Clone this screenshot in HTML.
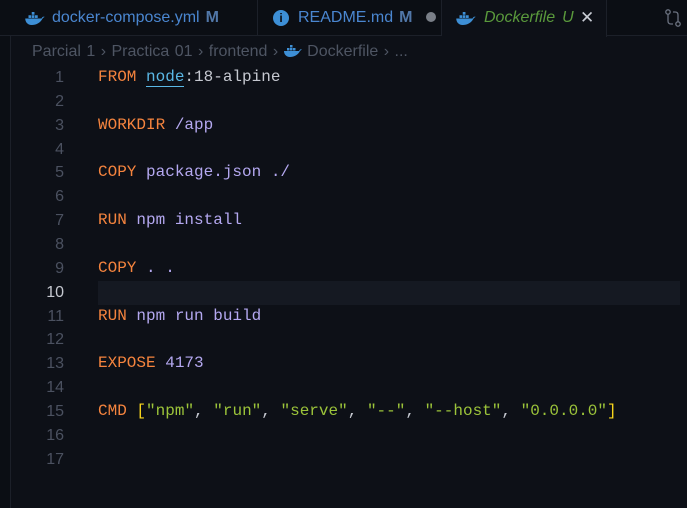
<!DOCTYPE html>
<html><head><meta charset="utf-8"><style>
*{margin:0;padding:0;box-sizing:border-box}
body{width:687px;height:472px;background:#0d1017;overflow:hidden;position:relative;font-family:"Liberation Sans",sans-serif}
.side{position:absolute;left:0;top:0;width:11px;height:472px;background:#0b0e14;border-right:1px solid #1c2029}
.tabs{position:absolute;left:0;top:0;width:687px;height:36px;background:#0b0e14;border-bottom:1px solid #1c2029}
.tab{position:absolute;top:0;height:36px;border-right:1px solid #1c2029;font-size:16px;line-height:36px;color:#4a86d0;white-space:nowrap}
.tab.act{background:#0d1017;height:37px}
.m{color:#5177a8;font-weight:bold;margin-left:6px}
.crumb{position:absolute;left:32px;top:41px;font-size:16px;color:#4e5563;white-space:nowrap;line-height:22px;word-spacing:1px}
.code{position:absolute;left:0;top:66px;width:687px;font-family:"Liberation Mono",monospace;font-size:16px}
.l{height:23.86px;line-height:23.86px;position:relative;white-space:pre}
.n{position:absolute;right:623px;color:#4b5160;font-size:16px;font-family:"Liberation Sans",sans-serif}
.t{position:absolute;left:98px;color:#b4a8f0}
.k{color:#f5843e}.s{color:#9cc43a}.y{color:#f7d51c}
.cur{position:absolute;left:98px;width:582px;background:#151922;height:23.86px}
.dk{position:absolute;top:12px}
</style></head><body>
<div class="tabs">
 <div class="tab" style="left:11px;width:247px;padding-left:41px"><svg class="dk" style="left:14px" width="20" height="13" viewBox="0 0 18 12"><path d="M0 6h15c1-2 2-2 3-1.5c-1 .5-1.5 1-2 1.5C14 10 10 12 6 12C2 12 0 9 0 6z" fill="#3d8fd6"/><rect x="3" y="3" width="2.5" height="2.5" fill="#3d8fd6"/><rect x="6" y="3" width="2.5" height="2.5" fill="#3d8fd6"/><rect x="9" y="3" width="2.5" height="2.5" fill="#3d8fd6"/><rect x="6" y="0" width="2.5" height="2.5" fill="#3d8fd6"/></svg>docker-compose.yml<span class="m">M</span></div>
 <div class="tab" style="left:258px;width:184px;padding-left:40px"><span style="position:absolute;left:15px;top:10px;width:16px;height:16px;border-radius:50%;background:#3d8fd6;color:#0b0e14;font-size:12px;line-height:16px;text-align:center;font-weight:bold">i</span>README.md<span class="m">M</span><span style="display:inline-block;width:10px;height:10px;border-radius:50%;background:#7a7f88;margin-left:14px"></span></div>
 <div class="tab act" style="left:442px;width:165px;padding-left:42px;color:#5a9a3c;font-style:italic"><svg class="dk" style="left:14px" width="20" height="13" viewBox="0 0 18 12"><path d="M0 6h15c1-2 2-2 3-1.5c-1 .5-1.5 1-2 1.5C14 10 10 12 6 12C2 12 0 9 0 6z" fill="#3d8fd6"/><rect x="3" y="3" width="2.5" height="2.5" fill="#3d8fd6"/><rect x="6" y="3" width="2.5" height="2.5" fill="#3d8fd6"/><rect x="9" y="3" width="2.5" height="2.5" fill="#3d8fd6"/><rect x="6" y="0" width="2.5" height="2.5" fill="#3d8fd6"/></svg>Dockerfile<span style="margin-left:7px">U</span><span style="font-style:normal;color:#c8ccd4;position:absolute;left:138px;font-size:17px">✕</span></div>
 <svg style="position:absolute;left:664px;top:8px" width="18" height="20" viewBox="0 0 18 20" fill="none" stroke="#6b7280" stroke-width="1.3"><circle cx="4" cy="4" r="2.2"/><circle cx="14" cy="16" r="2.2"/><path d="M4 6.5V13c0 2 1 3 3 3h2M14 13.5V7c0-2-1-3-3-3H9"/></svg>
</div>
<div class="side" style="top:36px"></div>
<div class="crumb">Parcial 1 <span>›</span> Practica 01 <span>›</span> frontend <span>›</span> <svg width="18" height="12" viewBox="0 0 18 12" style="vertical-align:-1px"><path d="M0 6h15c1-2 2-2 3-1.5c-1 .5-1.5 1-2 1.5C14 10 10 12 6 12C2 12 0 9 0 6z" fill="#3d8fd6"/><rect x="3" y="3" width="2.5" height="2.5" fill="#3d8fd6"/><rect x="6" y="3" width="2.5" height="2.5" fill="#3d8fd6"/><rect x="9" y="3" width="2.5" height="2.5" fill="#3d8fd6"/><rect x="6" y="0" width="2.5" height="2.5" fill="#3d8fd6"/></svg> Dockerfile <span>›</span> ...</div>
<div class="code">
<div class="l"><span class="n">1</span><span class="t"><span class="k">FROM</span> <span style="color:#5ab8e6;border-bottom:1px solid #5ab8e6">node</span><span style="color:#c5c8d0">:18-alpine</span></span></div>
<div class="l"><span class="n">2</span></div>
<div class="l"><span class="n">3</span><span class="t"><span class="k">WORKDIR</span> /app</span></div>
<div class="l"><span class="n">4</span></div>
<div class="l"><span class="n">5</span><span class="t"><span class="k">COPY</span> package.json ./</span></div>
<div class="l"><span class="n">6</span></div>
<div class="l"><span class="n">7</span><span class="t"><span class="k">RUN</span> npm install</span></div>
<div class="l"><span class="n">8</span></div>
<div class="l"><span class="n">9</span><span class="t"><span class="k">COPY</span> . .</span></div>
<div class="l"><div class="cur"></div><span class="n" style="color:#c5c8d0">10</span></div>
<div class="l"><span class="n">11</span><span class="t"><span class="k">RUN</span> npm run build</span></div>
<div class="l"><span class="n">12</span></div>
<div class="l"><span class="n">13</span><span class="t"><span class="k">EXPOSE</span> 4173</span></div>
<div class="l"><span class="n">14</span></div>
<div class="l"><span class="n">15</span><span class="t"><span class="k">CMD</span> <span class="y">[</span><span class="s">"npm"</span><span style="color:#c5c8d0">,</span> <span class="s">"run"</span><span style="color:#c5c8d0">,</span> <span class="s">"serve"</span><span style="color:#c5c8d0">,</span> <span class="s">"--"</span><span style="color:#c5c8d0">,</span> <span class="s">"--host"</span><span style="color:#c5c8d0">,</span> <span class="s">"0.0.0.0"</span><span class="y">]</span></span></div>
<div class="l"><span class="n">16</span></div>
<div class="l"><span class="n">17</span></div>
</div>
</body></html>
